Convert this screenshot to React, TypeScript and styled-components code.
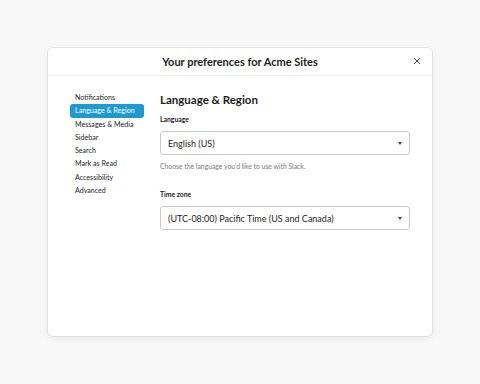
import React from "react";
import styled, { createGlobalStyle } from "styled-components";

const GlobalStyle = createGlobalStyle`
  html, body {
    margin: 0;
    padding: 0;
    background: #f8f8f8;
    font-family: Lato, "Liberation Sans", sans-serif;
  }
`;

const Page = styled.div`
  width: 480px;
  height: 384px;
  padding: 48px;
  box-sizing: border-box;
`;

const Modal = styled.div`
  width: 384px;
  height: 288px;
  background: #fff;
  border-radius: 5px;
  box-shadow: 0 0 0 1px rgba(0, 0, 0, 0.05), 0 2px 6px rgba(0, 0, 0, 0.08);
  display: flex;
  flex-direction: column;
`;

const Header = styled.div`
  height: 27px;
  border-bottom: 1px solid #eeeeee;
  display: flex;
  align-items: center;
  justify-content: center;
  position: relative;
`;

const Title = styled.div`
  font-size: 11px;
  font-weight: 700;
  color: #1d1c1d;
`;

const Close = styled.div`
  position: absolute;
  right: 10px;
  top: 8px;
  width: 10px;
  height: 10px;
  display: flex;
  align-items: center;
  justify-content: center;
`;

const Body = styled.div`
  display: flex;
  padding: 15px 22px 0 22px;
`;

const Nav = styled.div`
  width: 74px;
  display: flex;
  flex-direction: column;
  margin-right: 16px;
`;

const NavItem = styled.div<{ $active?: boolean }>`
  height: 13.3px;
  line-height: 13px;
  font-size: 7.1px;
  padding-left: 5px;
  border-radius: 3px;
  color: ${(p) => (p.$active ? "#fff" : "#1d1c1d")};
  background: ${(p) => (p.$active ? "#1d9bd1" : "transparent")};
  white-space: nowrap;
`;

const Content = styled.div`
  flex: 1;
  display: flex;
  flex-direction: column;
`;

const Heading = styled.div`
  font-size: 11.5px;
  font-weight: 700;
  color: #1d1c1d;
  margin-top: 2px;
  margin-bottom: 9px;
`;

const Label = styled.div`
  font-size: 6.8px;
  font-weight: 700;
  color: #1d1c1d;
  margin-bottom: 8px;
`;

const Select = styled.div`
  width: 250px;
  height: 24px;
  box-sizing: border-box;
  border: 1px solid #c8c8c8;
  border-radius: 3px;
  display: flex;
  align-items: center;
  justify-content: space-between;
  padding: 0 7px;
  font-size: 9px;
  color: #1d1c1d;
`;

const Caret = styled.span`
  width: 0;
  height: 0;
  border-left: 2.5px solid transparent;
  border-right: 2.5px solid transparent;
  border-top: 3px solid #444;
`;

const Help = styled.div`
  font-size: 6.8px;
  color: #7a7a7a;
  margin-top: 7px;
  margin-bottom: 20px;
`;

const navItems = [
  "Notifications",
  "Language & Region",
  "Messages & Media",
  "Sidebar",
  "Search",
  "Mark as Read",
  "Accessibility",
  "Advanced",
];

export default function App() {
  return (
    <>
      <GlobalStyle />
      <Page>
        <Modal>
          <Header>
            <Title>Your preferences for Acme Sites</Title>
            <Close>
              <svg width="8" height="8" viewBox="0 0 8 8">
                <path d="M1 1L7 7M7 1L1 7" stroke="#444" strokeWidth="1" />
              </svg>
            </Close>
          </Header>
          <Body>
            <Nav>
              {navItems.map((n) => (
                <NavItem key={n} $active={n === "Language & Region"}>
                  {n}
                </NavItem>
              ))}
            </Nav>
            <Content>
              <Heading>Language &amp; Region</Heading>
              <Label>Language</Label>
              <Select>
                English (US)
                <Caret />
              </Select>
              <Help>Choose the language you’d like to use with Slack.</Help>
              <Label>Time zone</Label>
              <Select>
                (UTC-08:00) Pacific Time (US and Canada)
                <Caret />
              </Select>
            </Content>
          </Body>
        </Modal>
      </Page>
    </>
  );
}
